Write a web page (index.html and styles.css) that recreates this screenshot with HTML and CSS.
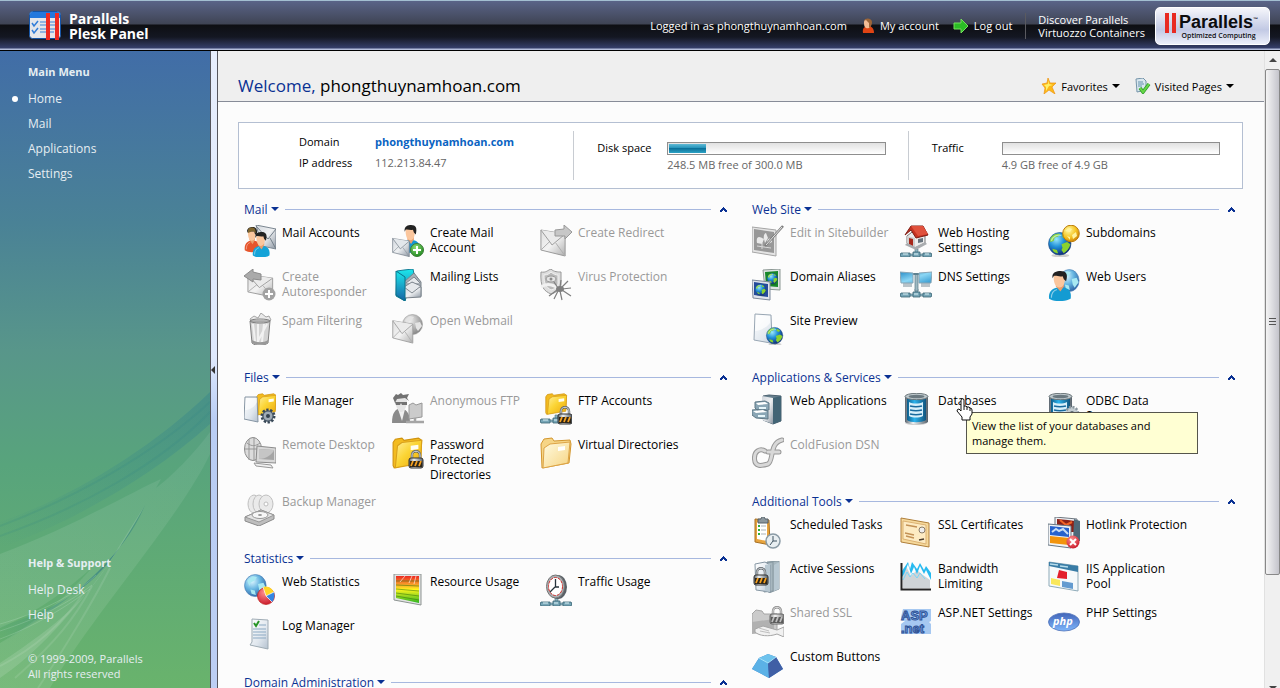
FILE: index.html
```html
<!DOCTYPE html>
<html lang="en">
<head>
<meta charset="utf-8">
<title>Parallels Plesk Panel</title>
<link rel="stylesheet" href="styles.css">
</head>
<body>
<svg class="sprite" aria-hidden="true">
  <defs>
    <linearGradient id="g-silver" x1="0" y1="0" x2="1" y2="1"><stop offset="0" stop-color="#d3d8de"/><stop offset=".5" stop-color="#eef0f2"/><stop offset="1" stop-color="#8d97a3"/></linearGradient>
    <linearGradient id="g-paper" x1="0" y1="0" x2="1" y2="1"><stop offset="0" stop-color="#fff"/><stop offset=".6" stop-color="#e0e7ee"/><stop offset="1" stop-color="#b4c1cf"/></linearGradient>
    <linearGradient id="g-gold" x1="0" y1="0" x2="1" y2="1"><stop offset="0" stop-color="#fff0a0"/><stop offset=".45" stop-color="#fbd535"/><stop offset="1" stop-color="#eba608"/></linearGradient>
    <linearGradient id="g-cream" x1="0" y1="0" x2="1" y2="1"><stop offset="0" stop-color="#fffbe2"/><stop offset="1" stop-color="#f6d481"/></linearGradient>
    <linearGradient id="g-cyan" x1="0" y1="0" x2="0" y2="1"><stop offset="0" stop-color="#1ce8ec"/><stop offset="1" stop-color="#1762a4"/></linearGradient>
    <linearGradient id="g-steel" x1="0" y1="0" x2="1" y2="0"><stop offset="0" stop-color="#59646e"/><stop offset=".35" stop-color="#edf1f3"/><stop offset="1" stop-color="#56616b"/></linearGradient>
    <linearGradient id="g-can" x1="0" y1="0" x2="1" y2="0"><stop offset="0" stop-color="#0e5d8b"/><stop offset=".4" stop-color="#2bb2ec"/><stop offset="1" stop-color="#11547e"/></linearGradient>
    <linearGradient id="g-screen" x1="0" y1="0" x2="1" y2="1"><stop offset="0" stop-color="#2b8ec8"/><stop offset=".5" stop-color="#8bd6f4"/><stop offset="1" stop-color="#2e96cf"/></linearGradient>
    <linearGradient id="g-heat" x1="0" y1="0" x2="0" y2="1"><stop offset="0" stop-color="#ec2822"/><stop offset=".3" stop-color="#f79a29"/><stop offset=".5" stop-color="#fff51c"/><stop offset="1" stop-color="#2ab622"/></linearGradient>
    <linearGradient id="g-php" x1="0" y1="0" x2="0" y2="1"><stop offset="0" stop-color="#4265b9"/><stop offset="1" stop-color="#7eb6fb"/></linearGradient>
    <radialGradient id="g-globe" cx=".35" cy=".3" r=".75"><stop offset="0" stop-color="#9ae7fb"/><stop offset=".45" stop-color="#2191d8"/><stop offset="1" stop-color="#10236f"/></radialGradient>
    <radialGradient id="g-pale" cx=".35" cy=".3" r=".75"><stop offset="0" stop-color="#dcf6ff"/><stop offset=".5" stop-color="#66b5e1"/><stop offset="1" stop-color="#2e63a5"/></radialGradient>
    <radialGradient id="g-sun" cx=".35" cy=".3" r=".75"><stop offset="0" stop-color="#fff9a0"/><stop offset=".6" stop-color="#f5c321"/><stop offset="1" stop-color="#ce8106"/></radialGradient>
    <radialGradient id="g-green" cx=".4" cy=".3" r=".8"><stop offset="0" stop-color="#8dde76"/><stop offset="1" stop-color="#168018"/></radialGradient>
    <radialGradient id="g-red" cx=".4" cy=".3" r=".8"><stop offset="0" stop-color="#ff8f8f"/><stop offset="1" stop-color="#c40e20"/></radialGradient>

    <g id="p-env"><path d="M1 2 27 6V28L1 22Z" fill="url(#g-silver)" stroke="#6c7682"/><path d="M1 22 11 13M27 28 17 15" stroke="#8b949e" fill="none"/><path d="M1 2 13 17 27 6" fill="#e3e7eb" stroke="#717b86"/></g>
    <g id="p-person"><path d="M1 27C0 20 4 17 8 16L14 16C19 17 21 21 20 27C15 30 5 30 1 27Z" fill="currentColor"/><path d="M3 26C3 21 5 19 8 18" stroke="#fff" stroke-opacity=".5" fill="none"/><path d="M7 15 11 20 14 15V12H7Z" fill="#e99e6c"/><path d="M5 6C5 1 15 1 15 7C15 13 13 16 10 16S5 12 5 6Z" fill="#fbc69d"/><path d="M4 7C3 1 8 0 11 0C16 0 18 3 16 10L14 8 13 5C10 6 7 4 5 5Z" fill="#222"/></g>
    <g id="p-globe"><ellipse cx="11" cy="21" rx="8" ry="1.5" fill="#000" opacity=".18"/><circle cx="10.500" cy="10.500" r="10" fill="url(#g-globe)" stroke="#1a4c87" stroke-width=".6"/><path d="M2 6C4 2 8 1 11 2L9 4 6 5 5 8 2 9ZM12 11 17 9 20 11C19 15 17 17 14 19L12 16 13 14ZM4 15 8 16 9 19C6 19 4 17 4 15ZM13 2 17 4 16 6 13 5Z" fill="#8bd22f"/><path d="M3 8C4 4 8 2 12 3" stroke="#d7fbff" stroke-width="1.200" fill="none" opacity=".6"/></g>
    <g id="p-world"><circle cx="10.500" cy="10.500" r="10" fill="url(#g-pale)" stroke="#4c80b5" stroke-width=".6"/><path d="M3 6 8 2 12 3 10 6 6 8 5 11ZM13 9 18 8 20 12 16 17 14 14ZM6 14 10 15 11 19 7 18Z" fill="#a8e9f2"/></g>
    <g id="p-folder"><path d="M1 5 3 2 9 1 11 3 24 1 27 3 26 22 2 28 1 26Z" fill="#f3bb20" stroke="#d09410"/><path d="M5 8 9 5 27 3 26 24 3 28Z" fill="url(#g-gold)" stroke="#d9a01a"/><path d="M17 8 24 7V11L17 12Z" fill="#fffdf0"/></g>
    <g id="p-lock"><path d="M3 8V5C3 0 11 0 11 5V8" fill="none" stroke="#5b6268" stroke-width="2.400"/><path d="M3 8V5C3 0 11 0 11 5V8" fill="none" stroke="#d9dde0" stroke-width="1"/><rect x="0" y="8" width="14" height="10" rx="2" fill="url(#g-steel)" stroke="#333"/><path d="M1 11H13V17H1Z" fill="#2d2519"/><path d="M2 16 4 11M6 16 8 11M10 16 12 11" stroke="#f6a120" stroke-width="1.800"/></g>
    <g id="p-net"><path d="M15 0H18V5H32V7H0V5H15Z" fill="#8db5c3" stroke="#4d7381" stroke-width=".6"/><path d="M1 4H10V8H1L0 6ZM23 4H31L32 6 31 8H23ZM13 3H20V8H13Z" fill="#77a6b7" stroke="#3b6475" stroke-width=".8"/><path d="M3 5H8M25 5H29M14 5H18" stroke="#dcf0f5"/></g>
    <g id="p-page"><path d="M3 1 19 2 20 25 27 28 24 31 2 27Z" fill="url(#g-paper)" stroke="#98a6b3"/><path d="M3 18C10 17 15 14 18 10V3L4 2Z" fill="#fff" opacity=".7"/></g>
    <g id="p-plus"><circle cx="7" cy="7" r="6.500" fill="url(#g-green)" stroke="#3a7d35"/><path d="M7 3V11M3 7H11" stroke="#fff" stroke-width="2"/></g>
  </defs>

  <symbol id="i-mail-accounts" viewBox="0 0 32 32"><path d="M12 0 32 4V24L18 21Z" fill="url(#g-silver)" stroke="#7c8792"/><path d="M12 1 24 14 32 4M32 24 26 13" stroke="#75808a" fill="none"/><use href="#p-person" transform="translate(0 2) scale(.78 .86)" color="#e6552c"/><path d="M4 5C5 2 9 2 11 4L12 8 9 6 4 8Z" fill="#80662f"/><use href="#p-person" transform="translate(8 7) scale(.87 .87)" color="#14a3d8"/></symbol>
  <symbol id="i-create-mail" viewBox="0 0 32 32"><use href="#p-person" transform="translate(9 0) scale(.92 .95)" color="#1596d2"/><use href="#p-env" transform="translate(0 12) scale(.64 .7)"/><use href="#p-plus" x="18" y="18"/></symbol>
  <symbol id="i-redirect" viewBox="0 0 32 32"><use href="#p-env" transform="translate(0 3) scale(.93 1)"/><path d="M15 5 24 4V0L32 7 25 14V11L15 11Z" fill="#b6b6b6" stroke="#777"/></symbol>
  <symbol id="i-autoresponder" viewBox="0 0 32 32"><use href="#p-env" transform="translate(3 4) scale(.95 .86)"/><path d="M0 7 9 0V3L17 5V11L9 10V13Z" fill="#8f8f8f" stroke="#666"/><circle cx="25" cy="25" r="6.500" fill="#858585"/><path d="M25 21V29M21 25H29" stroke="#fff" stroke-width="2"/></symbol>
  <symbol id="i-mailing-lists" viewBox="0 0 32 32"><path d="M5 2 12 1 21 0 22 5 13 32 4 27Z" fill="url(#g-cyan)" stroke="#167f98"/><path d="M12 13 22 4 29 13V27H12Z" fill="#a8afb6" stroke="#7b838b"/><path d="M12 18H29V28L12 29Z" fill="url(#g-silver)" stroke="#7b838b"/><path d="M12 18 20 24 29 17 20 13ZM14 14 22 8 28 14" fill="#e5e8eb" stroke="#808890"/><path d="M4 2 13 8V32L4 26Z" fill="url(#g-cyan)" stroke="#0a728b"/></symbol>
  <symbol id="i-virus" viewBox="0 0 32 32"><path d="M1 3C6 4 8 1 11 0C14 3 18 3 21 3V16C20 21 15 24 11 25C4 22 0 18 1 3Z" fill="#d5d5d5" stroke="#777"/><path d="M4 6C8 6 10 4 11 3C13 5 16 6 18 6V15C17 19 14 20 11 21C6 18 4 15 4 6Z" fill="#a4a4a4" stroke="#eee"/><ellipse cx="11" cy="10" rx="5" ry="3" fill="#ddd" stroke="#777"/><circle cx="11" cy="10" r="1.500" fill="#666"/><path d="M1 18C8 13 16 17 18 20" stroke="#eee" stroke-width="3" fill="none"/><ellipse cx="20" cy="20" rx="4" ry="3" fill="#555"/><path d="M18 19 14 13M20 18 21 11M21 19 28 12M22 20 31 19M22 21 31 27M20 22 22 31M18 22 14 30M17 21 9 27" stroke="#555" stroke-width="1.200"/></symbol>
  <symbol id="i-spam" viewBox="0 0 32 32"><path d="M6 6 10 3 14 5 17 0 22 4 25 3 27 7 24 10H8Z" fill="#e3e3e3" stroke="#888"/><path d="M6 8H26L24 30C20 33 11 33 8 30Z" fill="#c6c6c6" stroke="#555"/><path d="M9 11 11 28M14 11V29M20 11 18 29M23 11 14 28" stroke="#eee" stroke-width="2"/><path d="M8 27C12 30 20 30 24 27V30C20 32 12 32 8 30Z" fill="#777"/><ellipse cx="16" cy="8" rx="10" ry="2" fill="none" stroke="#555"/></symbol>
  <symbol id="i-webmail" viewBox="0 0 32 32"><use href="#p-world" transform="translate(10 1)"/><use href="#p-env" transform="translate(0 6) scale(.77 .86)"/></symbol>

  <symbol id="i-sitebuilder" viewBox="0 0 32 32"><path d="M0 2 24 5V31L0 27Z" fill="#ddd" stroke="#888"/><path d="M2 4 22 7V28L2 25Z" fill="#777"/><path d="M12 14C6 10 4 12 5 18L10 19ZM12 14C11 10 13 8 14 8L16 13 13 18ZM15 17C16 12 20 13 20 17L14 20Z" fill="#e3e3e3"/><path d="M5 21 19 23M10 18V24" stroke="#ccc"/><path d="M13 21 31 1" stroke="#555" stroke-width="2.600"/><path d="M14 20 30 2" stroke="#ddd"/></symbol>
  <symbol id="i-hosting" viewBox="0 0 32 32"><use href="#p-net" y="24"/><path d="M7 11 16 4 25 11V18L15 23 7 18Z" fill="#eee" stroke="#777"/><path d="M7 11 15 13V23L7 18Z" fill="#cfcfcf"/><path d="M5 10 11 1 23 1 28 10 16 13 11 5Z" fill="#c63221" stroke="#7c1c13"/><path d="M11 1 23 1 28 9 18 11Z" fill="#e0513c"/><path d="M9 13 13 14V21L9 19Z" fill="#a8281a"/><path d="M18 14 23 13V17L18 18Z" fill="#68747e"/><path d="M15 22 25 17 27 19 16 25 5 20 7 18Z" fill="#a9acaf"/></symbol>
  <symbol id="i-subdomains" viewBox="0 0 32 32"><use href="#p-globe" transform="translate(0 7) scale(1.120)"/><circle cx="23" cy="8.500" r="8.300" fill="url(#g-sun)" stroke="#bc7c08"/><path d="M17 6 21 3 24 4 22 7ZM24 10 28 7 29 11 25 14ZM19 11 22 12 22 15Z" fill="#fff3a0"/></symbol>
  <symbol id="i-aliases" viewBox="0 0 32 32"><path d="M11 1 28 0V21L13 20Z" fill="#dfe4e4" stroke="#8c9894"/><path d="M13 3 26 2V18L14 17Z" fill="#178729"/><use href="#p-globe" transform="translate(15 4) scale(.52)"/><path d="M0 11 18 13V31L1 29Z" fill="#dfe4ec" stroke="#7d899b"/><path d="M2 13 16 15V28L2 26Z" fill="#254b9a"/><use href="#p-globe" transform="translate(3 15) scale(.54)"/></symbol>
  <symbol id="i-dns" viewBox="0 0 32 32"><use href="#p-net" y="20"/><path d="M15 5H18V22H15Z" fill="#9fb8c2" stroke="#587988" stroke-width=".7"/><path d="M13 5H20" stroke="#5e8190" stroke-width="2"/><path d="M3 14H12V18H3ZM21 14H30V18H21Z" fill="#b9c3c9"/><path d="M0 3 13 4V14L1 14ZM32 3 19 4V14L31 14Z" fill="url(#g-screen)" stroke="#88a5b5"/></symbol>
  <symbol id="i-web-users" viewBox="0 0 32 32"><use href="#p-world" transform="translate(11 0) scale(.98 1.100)"/><use href="#p-person" transform="translate(0 2) scale(1.130 1.030)" color="#149bd2"/></symbol>
  <symbol id="i-preview" viewBox="0 0 32 32"><use href="#p-page"/><use href="#p-globe" transform="translate(14 14) scale(.82)"/></symbol>

  <symbol id="i-files" viewBox="0 0 32 32"><use href="#p-folder" transform="translate(12 0) scale(.74 .78)"/><path d="M1 4 13 4 14 29 0 26Z" fill="url(#g-paper)" stroke="#8594a2"/><path d="M1 17C7 17 12 12 13 9V5H2Z" fill="#fff" opacity=".6"/><circle cx="24" cy="23" r="6" fill="#8d9aa6" stroke="#374756" stroke-width="3" stroke-dasharray="2.200 1.500"/><circle cx="24" cy="23" r="5" fill="#9fabb6" stroke="#445362"/><circle cx="24" cy="23" r="2" fill="#33414e"/></symbol>
  <symbol id="i-anon" viewBox="0 0 32 32"><path d="M0 30C0 20 3 16 9 15C16 17 18 22 18 30Z" fill="#666"/><path d="M6 16 10 28 13 16Z" fill="#ececec"/><path d="M3 7C3 3 15 3 15 8C15 14 12 19 9 19S3 12 3 7Z" fill="#ddd"/><path d="M1 5 4 1 6 2 9 0 11 2 17 1 15 5 17 8 13 5 5 6 3 10Z" fill="#444"/><path d="M3 9H15V12H10L9 10 8 12H4Z" fill="#444"/><path d="M17 12 21 10 24 12 30 10V24L17 26Z" fill="#bbb" stroke="#777"/><path d="M14 29H32M23 25V30" stroke="#888" stroke-width="2.500"/></symbol>
  <symbol id="i-ftp" viewBox="0 0 32 32"><use href="#p-folder" transform="translate(5 0) scale(.8 .76)"/><use href="#p-net" y="22"/><use href="#p-lock" transform="translate(18 13)"/></symbol>
  <symbol id="i-remote" viewBox="0 0 32 32"><ellipse cx="9" cy="12" rx="8.500" ry="11.500" fill="#d2d2d2" stroke="#666"/><path d="M1 12H17M5 2V23M10 0V24M3 6C8 10 12 9 16 6" stroke="#777" fill="none"/><path d="M13 9 32 11V26L12 25Z" fill="#ccc" stroke="#666"/><path d="M15 12 30 13V23L15 22Z" fill="#888"/><path d="M15 22C22 22 29 17 30 13L15 12Z" fill="#b3b3b3"/><path d="M10 26 27 28 29 31 12 29Z" fill="#eee" stroke="#777"/></symbol>
  <symbol id="i-protected" viewBox="0 0 32 32"><use href="#p-folder" transform="scale(1.100)"/><use href="#p-lock" transform="translate(17 13)"/></symbol>
  <symbol id="i-virtual" viewBox="0 0 32 32"><path d="M1 7 4 2 12 1 14 4 30 3 31 7 29 26 2 31Z" fill="#f6d586" stroke="#d3962d"/><path d="M4 11 10 7 30 5 28 26 3 31Z" fill="url(#g-cream)" stroke="#dda446"/><path d="M18 10 25 9V13L18 14Z" fill="#fff"/></symbol>
  <symbol id="i-backup" viewBox="0 0 32 32"><g fill="#e4e4e4" stroke="#aaa"><ellipse cx="10" cy="10" rx="6" ry="9"/><ellipse cx="15" cy="10" rx="6" ry="9"/><ellipse cx="22" cy="10" rx="7" ry="9"/></g><circle cx="22" cy="10" r="2" fill="#fff" stroke="#aaa"/><path d="M1 23 17 16 30 21V25L15 32 1 27Z" fill="#aaa" stroke="#666"/><path d="M1 23 17 16 30 21 15 28Z" fill="#ddd" stroke="#777"/><ellipse cx="16" cy="21" rx="8" ry="3.500" fill="#f5f5f5" stroke="#777"/><ellipse cx="16" cy="21" rx="2" ry="1" fill="#777"/></symbol>

  <symbol id="i-webapps" viewBox="0 0 32 32"><path d="M11 3 17 2 29 3V28L21 31 11 27Z" fill="#667f8e" stroke="#4c6270"/><path d="M21 5 29 3V28L21 31Z" fill="#426475"/><path d="M10 3 21 5V31L10 27Z" fill="url(#g-silver)"/><path d="M3 9 13 8 17 10V17L6 18 3 15ZM0 17 11 16 16 18V26L4 25 0 22Z" fill="#8aa6b5" stroke="#5f7886"/><path d="M4 10 13 9 16 11 6 12ZM1 18 11 17 15 19 4 20Z" fill="#fff"/><path d="M7 15H14M6 23H13" stroke="#e7f6fa" stroke-width="2"/></symbol>
  <symbol id="i-db" viewBox="0 0 32 32"><ellipse cx="16" cy="30" rx="11" ry="2" fill="#000" opacity=".18"/><path d="M5 3H28V29C25 32 8 32 5 29Z" fill="url(#g-steel)"/><path d="M7 6H26V27C22 30 10 30 7 27Z" fill="url(#g-can)"/><ellipse cx="16.500" cy="3.500" rx="11.500" ry="3.200" fill="#bfc9cd" stroke="#6b7579"/><ellipse cx="16.500" cy="3.500" rx="8" ry="1.800" fill="#6b7980"/><path d="M9 9C13 11 19 11 23 9V23C19 25 13 25 9 23Z" fill="#d7effa"/><path d="M10 13C14 14 18 14 22 13M10 17C14 18 18 18 22 17M10 21C14 22 18 22 22 21" fill="none" stroke="#17699d" stroke-width="1.600"/></symbol>
  <symbol id="i-odbc" viewBox="0 0 32 32"><g transform="translate(-4 0)"><path d="M5 3H28V29C25 32 8 32 5 29Z" fill="url(#g-steel)"/><path d="M7 6H26V27C22 30 10 30 7 27Z" fill="url(#g-can)"/><ellipse cx="16.500" cy="3.500" rx="11.500" ry="3.200" fill="#bfc9cd" stroke="#6b7579"/><ellipse cx="16.500" cy="3.500" rx="8" ry="1.800" fill="#6b7980"/><path d="M9 9C13 11 19 11 23 9V23C19 25 13 25 9 23Z" fill="#d7effa"/><path d="M10 13C14 14 18 14 22 13M10 17C14 18 18 18 22 17" fill="none" stroke="#17699d" stroke-width="1.600"/></g><circle cx="24" cy="20" r="6" fill="#c3ccd1" stroke="#8b979f" stroke-width="2.500" stroke-dasharray="2 1.500"/><circle cx="24" cy="20" r="2" fill="#596870"/></symbol>
  <symbol id="i-cf" viewBox="0 0 32 32"><g fill="none" stroke-linecap="round"><path d="M13 14C8 11 2 14 2.500 22S9 29 16 27C22 24 17 6 30 3M16 15H27" stroke="#777" stroke-width="5"/><path d="M13 14C8 11 2 14 2.500 22S9 29 16 27C22 24 17 6 30 3M16 15H27" stroke="#ccc" stroke-width="3"/></g></symbol>

  <symbol id="i-tasks" viewBox="0 0 32 32"><path d="M3 2 17 3 18 28 3 25Z" fill="#e8a43d" stroke="#a77126"/><path d="M5 5 15 6V24L5 22Z" fill="#fff"/><path d="M6 2H9C9-1 13-1 13 2H16V6H6Z" fill="#8b969d" stroke="#566168"/><path d="M6 9H8M6 13H8M6 17H8" stroke="#31ae38" stroke-width="2"/><path d="M9 9H14M9 13H14M9 17H14" stroke="#aab3ba"/><circle cx="21" cy="24" r="7" fill="#e8eef1" stroke="#8a9aa5" stroke-width="1.500"/><path d="M21 19V24L18 28M21 24H25" stroke="#3e5260" fill="none"/></symbol>
  <symbol id="i-cert" viewBox="0 0 32 32"><path d="M1 1 29 6V30L1 25Z" fill="#f6d99c" stroke="#b07f3a"/><path d="M3 4 26 8V27L3 22Z" fill="#fdebc3" stroke="#dcb273"/><path d="M6 8 17 10M5 16 14 18M6 19 14 21" stroke="#c39155" stroke-width="1.300"/><circle cx="22" cy="13" r="3" fill="#eee" stroke="#8a7c68"/><path d="M19 23 24 22" stroke="#4e3f2e" stroke-width="1.500"/></symbol>
  <symbol id="i-hotlink" viewBox="0 0 32 32"><path d="M7 0 29 2V22L7 20Z" fill="#eef1f4" stroke="#6e7780"/><path d="M9 2 20 3 27 4V15H9Z" fill="#8d2118"/><path d="M12 3 18 8 24 5" stroke="#f16427" stroke-width="2" fill="none"/><path d="M26 2 32 4V24H25Z" fill="#4e6878"/><path d="M0 7 23 9V31L0 28Z" fill="#f1f3f5" stroke="#687784"/><path d="M2 9 21 11V20L2 18Z" fill="#2762cd"/><path d="M4 15 8 12 11 14 15 12 20 17" stroke="#c8def7" stroke-width="2" fill="none"/><path d="M2 19 21 21V28L2 26Z" fill="#f2940d"/><circle cx="25" cy="25" r="6.500" fill="url(#g-red)"/><path d="M22 22 28 28M28 22 22 28" stroke="#fff" stroke-width="2"/></symbol>
  <symbol id="i-sessions" viewBox="0 0 32 32"><path d="M15 1 27 0V28L17 32ZM10 2 21 1V30L12 31Z" fill="#a7b7bf" stroke="#8797a0"/><path d="M3 3 13 1 18 4V31L4 29Z" fill="url(#g-paper)" stroke="#8798a5"/><path d="M13 4 18 3V31L13 30ZM22 4 27 1V28L22 30Z" fill="#b8c8d2"/><use href="#p-lock" transform="translate(2 6)"/></symbol>
  <symbol id="i-bandwidth" viewBox="0 0 32 32"><path d="M3 8 6 5 11 15 17 9 23 14 30 19V27H3Z" fill="#cfd4d7"/><path d="M2 16 4 13 8 3 11 13 14 6 17 13 20 5 24 13 26 9 31 19V12L26 5 24 9 20 2 17 8 12 1 10 8 8 1 2 10Z" fill="#27baf0"/><path d="M3 19 7 11 10 16 13 12 17 17 20 12 25 18" stroke="#78d6f8" fill="none"/><path d="M1.500 2V28.500H31" stroke="#242424" stroke-width="2" fill="none"/></symbol>
  <symbol id="i-iis" viewBox="0 0 32 32"><path d="M1 1 30 5V30L1 25Z" fill="#f5f9fb" stroke="#8fabb9"/><path d="M1 1 30 5V11L1 5Z" fill="#397ca6"/><path d="M2 3 10 4M12 5 20 6" stroke="#b6dceb" stroke-width="1.500"/><path d="M11 9 19 11V18L9 17Z" fill="#e31f2c"/><path d="M3 17 12 19V25L3 23Z" fill="#f9e75a"/><path d="M14 20 25 22V28L14 26Z" fill="#639bd0"/></symbol>
  <symbol id="i-shared" viewBox="0 0 32 32"><path d="M0 9 4 5 10 6 12 9H25V26L0 27Z" fill="#bbb" stroke="#888"/><path d="M0 17 22 14V27L0 29Z" fill="#999"/><use href="#p-lock" transform="translate(18 1)"/><path d="M3 24 11 21 18 23 25 25 32 22V32L25 29C17 32 7 31 3 27Z" fill="#eee" stroke="#888"/><path d="M8 26 18 28M7 23 17 26" stroke="#aaa"/></symbol>
  <symbol id="i-custom" viewBox="0 0 32 32"><path d="M7 9 16 5 24 8 31 20 17 29 0 20Z" fill="#4484ca"/><path d="M7 9 16 5 24 8 16 14Z" fill="#6ec3ed"/><path d="M7 9 16 14 17 29 0 20Z" fill="#5bb1e6"/><path d="M16 14 24 8 31 20 17 29Z" fill="#405fa5"/><path d="M7 9 16 14 24 8" stroke="#a4e3fa" fill="none"/></symbol>

  <symbol id="i-webstats" viewBox="0 0 32 32"><use href="#p-world" transform="scale(1.080 1.100)"/><circle cx="22" cy="22" r="8.500" fill="url(#g-red)" stroke="#bf201b" stroke-width=".7"/><path d="M22 22 19 13C24 11 29 15 30 19Z" fill="#ffd426"/><path d="M22 22 30 18C31 22 30 26 28 28Z" fill="#3485e2"/><path d="M30 18 22 22 28 28M19 13 22 22" fill="none" stroke="#fff" stroke-width=".7"/></symbol>
  <symbol id="i-resource" viewBox="0 0 32 32"><path d="M2 0H29V31L2 26Z" fill="#e3e4e4" stroke="#8d9492"/><path d="M4 2H27V29L4 24Z" fill="url(#g-heat)"/><path d="M4 7H27M4 11 27 12M4 15 27 17M4 19 27 22M4 22 27 26" stroke="#37740b" stroke-opacity=".55"/><path d="M8 8 13 2M17 9 20 2M22 10 24 2" stroke="#fff" opacity=".6"/></symbol>
  <symbol id="i-traffic" viewBox="0 0 32 32"><use href="#p-net" y="24"/><ellipse cx="18" cy="13" rx="9" ry="12" fill="#596066"/><ellipse cx="15.500" cy="12.500" rx="9" ry="11.500" fill="#aab0b4" stroke="#777"/><ellipse cx="15.500" cy="12.500" rx="7" ry="9" fill="#fff" stroke="#d32e28" stroke-dasharray="3 1"/><path d="M15.500 5V13H19M10 18 15 13" stroke="#27343c" stroke-width="1.300" fill="none"/></symbol>
  <symbol id="i-log" viewBox="0 0 32 32"><path d="M8 1 24 2V31L6 27 8 24Z" fill="url(#g-paper)" stroke="#9eabb4"/><path d="M10 5 12 8 15 3" stroke="#269425" stroke-width="2" fill="none"/><path d="M15 7H22M9 11H22M9 14H22M9 17H22M9 20H22" stroke="#8ba9c3"/></symbol>
  <symbol id="i-star" viewBox="0 0 16 16"><path d="M7 0 9 5 15 5 11 9 14 16 8 12 3 16 4 10 1 6 6 5Z" fill="#fcb918" stroke="#ee9210" stroke-width=".7"/><path d="M7 2 8 6 12 7 8 8 5 13 5 9 3 7 7 6Z" fill="#fff16a"/></symbol>
  <symbol id="i-visited" viewBox="0 0 16 16"><path d="M1 1 8 0 11 3V12L2 14Z" fill="#d9e7ef" stroke="#7594a9"/><path d="M3 4H8M3 6H9M3 8H7" stroke="#6593ae"/><path d="M5 10 8 14 14 6" stroke="#2f9a2c" stroke-width="3.500" fill="none"/><path d="M5 10 8 14 14 6" stroke="#67d747" stroke-width="2" fill="none"/></symbol>
  <symbol id="i-user" viewBox="0 0 14 16"><path d="M2 15C1 10 4 8 7 8C11 8 13 11 13 15Z" fill="#e04414"/><path d="M3 4C3 0 10 0 10 5S7 11 5 10 3 7 3 4Z" fill="#f3bc95"/><path d="M3 3C4-1 11 0 11 4 11 7 10 8 8 10L8 5 5 2Z" fill="#9c6538"/></symbol>
  <symbol id="i-logout" viewBox="0 0 16 16"><path d="M1 5H8V1L15 8 8 15V11H1Z" fill="#2bbd25" stroke="#75e05d"/></symbol>
  <symbol id="i-up" viewBox="0 0 7 5"><path d="M3 0H4V1H5V2H6V3H7V5H5V4H4V3H3V4H2V5H0V3H1V2H2V1H3Z" fill="#0a3193"/></symbol>
</svg>

<div class="app">
  <header class="topbar">
    <a class="brand" href="#">
      <svg class="brand-mark" viewBox="0 0 32 30"><rect x=".5" y=".5" width="31" height="27" rx="3" fill="#e5e6ea" stroke="#1554a5"/><path d="M1 7V3Q1 1 3 1H29Q31 1 31 3V7Z" fill="#2478dc"/><path d="M3 12 5 15 9 10M3 19 5 22 9 17" fill="none" stroke="#327dd8" stroke-width="1.500"/><path d="M11 11H28M11 14H26M11 18H28M11 21H25" stroke="#3d82d6" stroke-width="1.200"/><path d="M17 2H21V29H17ZM26 2H30V29H26Z" fill="#ee2b22"/></svg>
      <span>Parallels<br>Plesk Panel</span>
    </a>
    <div class="account">
      <span>Logged in as phongthuynamhoan.com</span>
      <a class="account-link" href="#"><svg class="user-icon"><use href="#i-user"/></svg>My account</a>
      <a class="account-link" href="#"><svg class="small-icon"><use href="#i-logout"/></svg>Log out</a>
      <a class="discover" href="#">Discover Parallels<br>Virtuozzo Containers</a>
      <a class="badge" href="#"><svg class="bars" viewBox="0 0 11 20"><path d="M0 0H4V20H0ZM7 0H11V20H7Z" fill="#e82a22"/></svg><span class="badge-text"><b>Parallels<sup>™</sup></b><small>Optimized Computing</small></span></a>
    </div>
  </header>

  <div class="body">
    <aside class="sidebar">
      <svg class="waves" viewBox="0 0 210 310" preserveAspectRatio="none" aria-hidden="true">
        <defs><linearGradient id="w-blue" x1="0" y1="1" x2="1" y2="0"><stop offset="0" stop-color="#2f808c" stop-opacity="0"/><stop offset="1" stop-color="#2f808c" stop-opacity=".38"/></linearGradient><linearGradient id="w-white" x1="0" y1="1" x2="1" y2="0"><stop offset="0" stop-color="#fff" stop-opacity=".1"/><stop offset="1" stop-color="#fff" stop-opacity=".07"/></linearGradient><linearGradient id="w-dark" x1="0" y1="1" x2="1" y2="0"><stop offset="0" stop-color="#2c8382" stop-opacity="0"/><stop offset=".7" stop-color="#236f83" stop-opacity=".6"/><stop offset="1" stop-color="#358775" stop-opacity=".4"/></linearGradient></defs>
        <path d="M0 144C70 120 150 72 210 14V46C150 100 70 145 0 170Z" fill="url(#w-blue)"/>
        <path d="M0 148C75 120 155 75 210 24M0 158C80 130 160 86 210 34" fill="none" stroke="#2d7c87" stroke-opacity=".14" stroke-width="2"/>
        <path d="M0 176C70 150 130 115 161 101L156 110C170 100 195 75 210 54V76C180 140 90 240 50 310H0V265C60 230 110 180 128 131L145 127C120 170 60 225 0 250Z" fill="url(#w-white)"/>
        <path d="M0 248C40 238 80 216 98 196 112 183 128 158 145 127 130 165 90 213 0 266Z" fill="url(#w-dark)"/>
        <path d="M0 246C40 235 78 215 96 197M0 253C40 240 70 224 92 207M0 261C40 246 70 226 90 211" fill="none" stroke="#d9efdf" stroke-opacity=".2"/>
        <path d="M145 127C120 175 60 260 0 300V285C60 245 90 220 118 170Z" fill="#fff" fill-opacity=".12"/>
        <path d="M0 288C45 265 70 235 85 213M15 300C55 265 75 240 92 208M38 310C65 270 95 220 110 190" fill="none" stroke="#fff" stroke-opacity=".1" stroke-width="2"/>
      </svg>
      <nav class="menu" aria-label="Main menu">
        <h2>Main Menu</h2>
        <ul><li class="current"><a href="#">Home</a></li><li><a href="#">Mail</a></li><li><a href="#">Applications</a></li><li><a href="#">Settings</a></li></ul>
      </nav>
      <nav class="menu menu-help" aria-label="Help">
        <h2>Help &amp; Support</h2>
        <ul><li><a href="#">Help Desk</a></li><li><a href="#">Help</a></li></ul>
      </nav>
      <p class="legal">© 1999-2009, Parallels<br>All rights reserved</p>
    </aside>
    <button class="splitter" aria-label="Collapse sidebar"></button>

    <main class="main">
      <div class="page-head">
        <h1><span>Welcome,</span> phongthuynamhoan.com</h1>
        <div class="tools">
          <button><svg class="small-icon"><use href="#i-star"/></svg>Favorites<i class="caret"></i></button>
          <button><svg class="small-icon"><use href="#i-visited"/></svg>Visited Pages<i class="caret"></i></button>
        </div>
      </div>
      <div class="content">
        <section class="summary">
          <dl class="facts">
            <dt>Domain</dt><dd><a href="#">phongthuynamhoan.com</a></dd>
            <dt>IP address</dt><dd>112.213.84.47</dd>
          </dl>
          <div class="usage"><span>Disk space</span><div class="meter-box"><div class="meter" role="img" aria-label="17 percent used"><div class="meter-fill" style="width:17%"></div></div><p>248.5 MB free of 300.0 MB</p></div></div>
          <div class="usage"><span>Traffic</span><div class="meter-box"><div class="meter" role="img" aria-label="0 percent used"></div><p>4.9 GB free of 4.9 GB</p></div></div>
        </section>

        <div class="columns">
          <div class="column">
            <section>
              <div class="group-head"><h2><button>Mail<i class="caret"></i></button></h2><hr><button aria-label="Collapse Mail"><svg class="up"><use href="#i-up"/></svg></button></div>
              <div class="items">
                <a class="item" href="#"><svg class="icon"><use href="#i-mail-accounts"/></svg><span>Mail Accounts</span></a>
                <a class="item" href="#"><svg class="icon"><use href="#i-create-mail"/></svg><span>Create Mail Account</span></a>
                <a class="item off" href="#"><svg class="icon"><use href="#i-redirect"/></svg><span>Create Redirect</span></a>
                <a class="item off" href="#"><svg class="icon"><use href="#i-autoresponder"/></svg><span>Create Autoresponder</span></a>
                <a class="item" href="#"><svg class="icon"><use href="#i-mailing-lists"/></svg><span>Mailing Lists</span></a>
                <a class="item off" href="#"><svg class="icon"><use href="#i-virus"/></svg><span>Virus Protection</span></a>
                <a class="item off" href="#"><svg class="icon"><use href="#i-spam"/></svg><span>Spam Filtering</span></a>
                <a class="item off" href="#"><svg class="icon"><use href="#i-webmail"/></svg><span>Open Webmail</span></a>
              </div>
            </section>
            <section>
              <div class="group-head"><h2><button>Files<i class="caret"></i></button></h2><hr><button aria-label="Collapse Files"><svg class="up"><use href="#i-up"/></svg></button></div>
              <div class="items">
                <a class="item" href="#"><svg class="icon"><use href="#i-files"/></svg><span>File Manager</span></a>
                <a class="item off" href="#"><svg class="icon"><use href="#i-anon"/></svg><span>Anonymous FTP</span></a>
                <a class="item" href="#"><svg class="icon"><use href="#i-ftp"/></svg><span>FTP Accounts</span></a>
                <a class="item off" href="#"><svg class="icon"><use href="#i-remote"/></svg><span>Remote Desktop</span></a>
                <a class="item" href="#"><svg class="icon"><use href="#i-protected"/></svg><span>Password Protected Directories</span></a>
                <a class="item one-line" href="#"><svg class="icon"><use href="#i-virtual"/></svg><span>Virtual Directories</span></a>
                <a class="item off" href="#"><svg class="icon"><use href="#i-backup"/></svg><span>Backup Manager</span></a>
              </div>
            </section>
            <section>
              <div class="group-head"><h2><button>Statistics<i class="caret"></i></button></h2><hr><button aria-label="Collapse Statistics"><svg class="up"><use href="#i-up"/></svg></button></div>
              <div class="items">
                <a class="item" href="#"><svg class="icon"><use href="#i-webstats"/></svg><span>Web Statistics</span></a>
                <a class="item" href="#"><svg class="icon"><use href="#i-resource"/></svg><span>Resource Usage</span></a>
                <a class="item" href="#"><svg class="icon"><use href="#i-traffic"/></svg><span>Traffic Usage</span></a>
                <a class="item" href="#"><svg class="icon"><use href="#i-log"/></svg><span>Log Manager</span></a>
              </div>
            </section>
            <section>
              <div class="group-head"><h2><button>Domain Administration<i class="caret"></i></button></h2><hr><button aria-label="Collapse Domain Administration"><svg class="up"><use href="#i-up"/></svg></button></div>
            </section>
          </div>

          <div class="column">
            <section>
              <div class="group-head"><h2><button>Web Site<i class="caret"></i></button></h2><hr><button aria-label="Collapse Web Site"><svg class="up"><use href="#i-up"/></svg></button></div>
              <div class="items">
                <a class="item off" href="#"><svg class="icon"><use href="#i-sitebuilder"/></svg><span>Edit in Sitebuilder</span></a>
                <a class="item" href="#"><svg class="icon"><use href="#i-hosting"/></svg><span>Web Hosting Settings</span></a>
                <a class="item" href="#"><svg class="icon"><use href="#i-subdomains"/></svg><span>Subdomains</span></a>
                <a class="item" href="#"><svg class="icon"><use href="#i-aliases"/></svg><span>Domain Aliases</span></a>
                <a class="item" href="#"><svg class="icon"><use href="#i-dns"/></svg><span>DNS Settings</span></a>
                <a class="item" href="#"><svg class="icon"><use href="#i-web-users"/></svg><span>Web Users</span></a>
                <a class="item" href="#"><svg class="icon"><use href="#i-preview"/></svg><span>Site Preview</span></a>
              </div>
            </section>
            <section>
              <div class="group-head"><h2><button>Applications &amp; Services<i class="caret"></i></button></h2><hr><button aria-label="Collapse Applications and Services"><svg class="up"><use href="#i-up"/></svg></button></div>
              <div class="items">
                <a class="item" href="#"><svg class="icon"><use href="#i-webapps"/></svg><span>Web Applications</span></a>
                <div class="tip-anchor">
                  <a class="item" href="#" aria-describedby="db-tip"><svg class="icon"><use href="#i-db"/></svg><span>Databases</span></a>
                  <div class="tooltip" id="db-tip" role="tooltip">View the list of your databases and manage them.</div>
                  <svg class="pointer" viewBox="0 0 17 23" aria-hidden="true"><path d="M5 1.500Q6.500 0 8 1.500V8L10 8 11 9 13 9 14 10Q16 10 16 12V16L14 19V22H6V19L1 13Q1 11 3 11L5 13Z" fill="#fff" stroke="#111"/><path d="M8 8V12M11 9V12M14 10V13" stroke="#111"/></svg>
                </div>
                <a class="item" href="#"><svg class="icon"><use href="#i-odbc"/></svg><span>ODBC Data Sources</span></a>
                <a class="item off" href="#"><svg class="icon"><use href="#i-cf"/></svg><span>ColdFusion DSN</span></a>
              </div>
            </section>
            <section>
              <div class="group-head"><h2><button>Additional Tools<i class="caret"></i></button></h2><hr><button aria-label="Collapse Additional Tools"><svg class="up"><use href="#i-up"/></svg></button></div>
              <div class="items">
                <a class="item" href="#"><svg class="icon"><use href="#i-tasks"/></svg><span>Scheduled Tasks</span></a>
                <a class="item" href="#"><svg class="icon"><use href="#i-cert"/></svg><span>SSL Certificates</span></a>
                <a class="item one-line" href="#"><svg class="icon"><use href="#i-hotlink"/></svg><span>Hotlink Protection</span></a>
                <a class="item" href="#"><svg class="icon"><use href="#i-sessions"/></svg><span>Active Sessions</span></a>
                <a class="item" href="#"><svg class="icon"><use href="#i-bandwidth"/></svg><span>Bandwidth Limiting</span></a>
                <a class="item" href="#"><svg class="icon"><use href="#i-iis"/></svg><span>IIS Application Pool</span></a>
                <a class="item off" href="#"><svg class="icon"><use href="#i-shared"/></svg><span>Shared SSL</span></a>
                <a class="item" href="#"><svg class="icon asp" viewBox="0 0 32 32"><path d="M3 4H31V16L29 17 31 19V29H1V19L5 16Q1 15 1 12Z" fill="#a6c8f1"/><text x="1" y="15">ASP</text><text x="1" y="28">.net</text></svg><span>ASP.NET Settings</span></a>
                <a class="item" href="#"><svg class="icon php" viewBox="0 0 32 32"><ellipse cx="16" cy="17" rx="15.500" ry="9" fill="url(#g-php)" stroke="#4d70b8" stroke-width=".8"/><text x="5" y="20">php</text></svg><span>PHP Settings</span></a>
                <a class="item" href="#"><svg class="icon"><use href="#i-custom"/></svg><span>Custom Buttons</span></a>
              </div>
            </section>
          </div>
        </div>
      </div>
    </main>
    <div class="scrollbar" aria-hidden="true"><i class="arrow arrow-up"></i><div class="track"><div class="thumb"><i></i></div></div><i class="arrow arrow-down"></i></div>
  </div>
</div>
</body>
</html>
```
FILE: styles.css
```css
* { box-sizing: border-box; }
body { margin: 0; font: 12px/15px "Open Sans", "Noto Sans", sans-serif; color: #000; }
a { color: inherit; text-decoration: none; }
button { border: 0; padding: 0; background: none; font: inherit; color: inherit; cursor: pointer; }
h1, h2, p, ul, dl, dd { margin: 0; padding: 0; }
ul { list-style: none; }
svg { display: block; flex: none; }
.sprite { position: absolute; width: 0; height: 0; }

.app { display: flex; flex-direction: column; height: 100vh; overflow: hidden; }

.topbar { display: flex; justify-content: space-between; align-items: center; flex: none; height: 51px; padding: 0 10px 0 29px; border-top: 1px solid #a3bfd1; border-bottom: 1px solid #000; color: #fff; background: linear-gradient(#5a6488 0, #3f4454 23px, #0e0f13 24px, #141722 36px, #353f6a 47px, #b3bddb 48px); }
.brand { display: flex; align-items: center; gap: 8px; font-size: 14px; font-weight: 700; }
.brand-mark { width: 32px; height: 30px; }
.account { display: flex; align-items: center; font-size: 11px; }
.account-link { display: flex; align-items: center; gap: 5px; margin-left: 14px; }
.user-icon { width: 14px; height: 16px; }
.small-icon { width: 16px; height: 16px; }
.discover { margin-left: 13px; padding-left: 12px; border-left: 1px solid #5a5a60; line-height: 13px; }
.badge { display: flex; align-items: center; gap: 3px; width: 115px; height: 38px; margin-left: 10px; padding-left: 9px; border: 1px solid #fff; border-radius: 5px; color: #0c0c0e; background: linear-gradient(#f5f6fb, #c2c9e4 60%, #eceffa); }
.bars { width: 11px; height: 20px; align-self: flex-start; margin-top: 5px; }
.badge-text { display: flex; flex-direction: column; }
.badge b { font-family: "Liberation Sans", sans-serif; font-size: 18px; line-height: 20px; }
.badge sup { font-size: 5px; line-height: 1; }
.badge small { font-size: 7px; font-weight: 600; line-height: 8px; text-align: center; }

.body { display: flex; flex: 1; min-height: 0; }
.sidebar { position: relative; display: flex; flex-direction: column; flex: none; width: 210px; padding: 8px 0 7px; color: #e6eef2; background: linear-gradient(#416da7, #4a8296 27%, #58968a 47%, #58a47c 65%, #69b36c); }
.waves { position: absolute; left: 0; bottom: 0; width: 100%; height: 310px; }
.menu, .legal { position: relative; padding-left: 28px; }
.menu h2 { margin-bottom: 2px; font-size: 11px; line-height: 25px; }
.menu li { line-height: 25px; }
.menu .current::before { content: ""; position: absolute; left: 12px; margin-top: 10px; width: 6px; height: 6px; border-radius: 50%; background: #fff; }
.menu-help { margin-top: auto; }
.legal { margin-top: 24px; font-size: 11px; }
.splitter { display: flex; align-items: center; flex: none; width: 8px; border: 1px solid #55555c; border-width: 0 1px; background: linear-gradient(#e6edfc 0, #dfe9fd 48%, #b9cdf4 58%, #bccef3); }
.splitter::before { content: ""; border: 4px solid transparent; border-right-color: #333; border-left: 0; }

.main { flex: 1; min-width: 0; overflow: hidden; background: #fcfcfc; }
.page-head { display: flex; justify-content: space-between; align-items: center; height: 51px; padding: 20px 30px 0 20px; border-bottom: 1px solid #878c98; background: #efefef; }
h1 { font-size: 17px; font-weight: 400; line-height: 24px; }
h1 span { color: #0a3193; }
.tools { display: flex; gap: 15px; font-size: 11px; }
.tools button { display: flex; align-items: center; gap: 4px; }
.caret { display: inline-block; border: 4px solid transparent; border-top-color: currentColor; border-bottom: 0; }
.content { padding: 20px 21px 0 20px; }
.summary { display: grid; grid-template-columns: repeat(3, 1fr); padding: 8px 0; border: 1px solid #b4bfd2; background: #fff; font-size: 11px; }
.facts { display: grid; grid-template-columns: 76px 1fr; padding: 0 0 7px 60px; line-height: 21px; }
.facts dd { color: #666; }
.facts a { font-weight: 700; color: #0a63c2; }
.usage { display: flex; padding: 9px 22px 0 23px; border-left: 1px solid #c8ccd2; }
.usage > span { width: 70px; }
.meter-box { flex: 1; }
.meter { height: 13px; margin: 2px 0; padding: 1px; border: 1px solid #8e8e8e; background: linear-gradient(#e1e1e1, #fff); }
.meter-fill { height: 9px; background: linear-gradient(#60bad5, #2392b9 45%, #0c7199 50%, #2ca2c5); }
.usage p { color: #666; }

.columns { display: grid; grid-template-columns: 1fr 1fr; gap: 24px; padding: 12px 7px 0 6px; }
.group-head { display: flex; align-items: center; height: 16px; margin-bottom: 8px; padding-right: 1px; color: #0a3193; }
.group-head h2 { font-size: 12px; font-weight: 400; }
.group-head h2 button { display: flex; align-items: center; gap: 3px; }
.group-head hr { flex: 1; height: 1px; margin: 0 9px 0 6px; border: 0; background: #a7b8df; }
.up { width: 7px; height: 5px; }
.items { display: grid; grid-template-columns: repeat(3, 148px); margin-bottom: 12px; }
.item { display: flex; gap: 6px; padding-bottom: 12px; }
.item span { width: 100px; }
.one-line span { white-space: nowrap; }
.icon { width: 32px; height: 32px; }
.off { color: #999; }
.off .icon { filter: grayscale(1); opacity: .75; }
.asp { font: 700 13px "Liberation Sans", sans-serif; fill: #73a7ed; stroke: #325497; stroke-width: 1; }
.asp path { stroke: none; }
.php { font: italic 700 11px "Open Sans", sans-serif; fill: #fff; }
.tip-anchor { position: relative; z-index: 1; }
.tooltip { position: absolute; left: 66px; top: 19px; width: 232px; padding: 5px; border: 1px solid #55554c; background: #ffffd3; font-size: 11px; }
.pointer { position: absolute; left: 56px; top: 5px; width: 17px; height: 23px; }

.scrollbar { display: flex; flex-direction: column; align-items: center; flex: none; width: 16px; border-left: 1px solid #e1e1e1; background: #f0f0f0; }
.arrow { flex: none; border: 4px solid transparent; }
.arrow-up { margin: 3px 0 7px; border-bottom-color: #444; }
.arrow-down { margin-bottom: -6px; border-top-color: #444; }
.track { flex: 1; width: 100%; }
.thumb { display: flex; align-items: center; justify-content: center; height: 82%; border: 1px solid #888; border-radius: 2px; background: linear-gradient(90deg, #f4f4f4, #dcdce0 50%, #c4c4cb); }
.thumb i { width: 7px; height: 8px; background: repeating-linear-gradient(#555 0 1px, transparent 1px 3px); }
```
